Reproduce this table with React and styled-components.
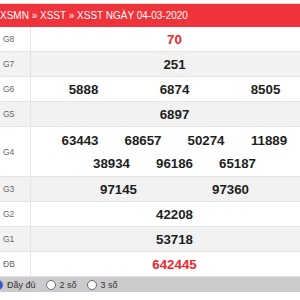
import React from "react";
import styled, { createGlobalStyle } from "styled-components";

const Global = createGlobalStyle`
  html, body { margin: 0; padding: 0; background: #fff; overflow: hidden; }
  body { font-family: "Liberation Sans", Arial, sans-serif; }
`;

const Page = styled.div`
  width: 300px;
  height: 300px;
  overflow: hidden;
  padding-top: 3px;
  box-sizing: border-box;
`;

const Box = styled.div`
  width: 318px;
  border-top: 1px solid #d6d6d6;
`;

const Header = styled.div`
  height: 23px;
  background: #f0323a;
  color: #fff;
  font-size: 10px;
  display: flex;
  align-items: center;
  white-space: nowrap;
`;

const Row = styled.div`
  display: grid;
  grid-template-columns: 31px 1fr;
  height: ${(p) => p.$h}px;
  box-sizing: border-box;
  border-bottom: 1px solid #e4e4e4;
  background: ${(p) => (p.$alt ? "#f2f2f2" : "#fff")};
`;

const Label = styled.div`
  border-right: 1px solid #e4e4e4;
  display: flex;
  align-items: center;
  padding-left: 3px;
  font-size: 8.5px;
  color: #666;
`;

const Cell = styled.div`
  display: flex;
  flex-direction: column;
  justify-content: center;
  gap: 10px;
`;

const Line = styled.div`
  display: flex;
  justify-content: center;
`;

const Num = styled.span`
  width: ${(p) => (p.$w ? `${p.$w}px` : "auto")};
  text-align: center;
  font-size: 13.3px;
  font-weight: bold;
  line-height: 13px;
  color: ${(p) => (p.$red ? "#ee262d" : "#1e1e1e")};
`;

const Footer = styled.div`
  height: 15px;
  background: #cbcbcb;
  display: flex;
  align-items: center;
  margin-left: -7px;
  font-size: 9px;
  color: #333;
`;

const Radio = styled.span`
  width: 10px;
  height: 10px;
  border-radius: 50%;
  box-sizing: border-box;
  background: #fff;
  border: ${(p) => (p.$on ? "3px solid #3b5bd6" : "1px solid #6a6a8a")};
  margin-right: 4px;
  flex: none;
`;

const Opt = styled.span`
  margin-right: 10px;
`;

const rows = [
  { g: "G8", lines: [["70"]], red: true },
  { g: "G7", lines: [["251"]] },
  { g: "G6", lines: [["5888", "6874", "8505"]], w: 91 },
  { g: "G5", lines: [["6897"]] },
  { g: "G4", lines: [["63443", "68657", "50274", "11889"], ["38934", "96186", "65187"]], w: 63, h: 50 },
  { g: "G3", lines: [["97145", "97360"]], w: 112 },
  { g: "G2", lines: [["42208"]] },
  { g: "G1", lines: [["53718"]] },
  { g: "ĐB", lines: [["642445"]], red: true },
];

export default function App() {
  return (
    <Page>
      <Global />
      <Box>
        <Header>XSMN » XSST » XSST NGÀY 04-03-2020</Header>
        {rows.map((r, i) => (
          <Row key={r.g} $alt={i % 2 === 1} $h={r.h || 25}>
            <Label>{r.g}</Label>
            <Cell>
              {r.lines.map((l, j) => (
                <Line key={j}>
                  {l.map((n) => (
                    <Num key={n} $w={l.length > 1 ? r.w : 0} $red={r.red}>
                      {n}
                    </Num>
                  ))}
                </Line>
              ))}
            </Cell>
          </Row>
        ))}
        <Footer>
          <Radio $on />
          <Opt>Đầy đủ</Opt>
          <Radio />
          <Opt>2 số</Opt>
          <Radio />
          <Opt>3 số</Opt>
        </Footer>
      </Box>
    </Page>
  );
}
